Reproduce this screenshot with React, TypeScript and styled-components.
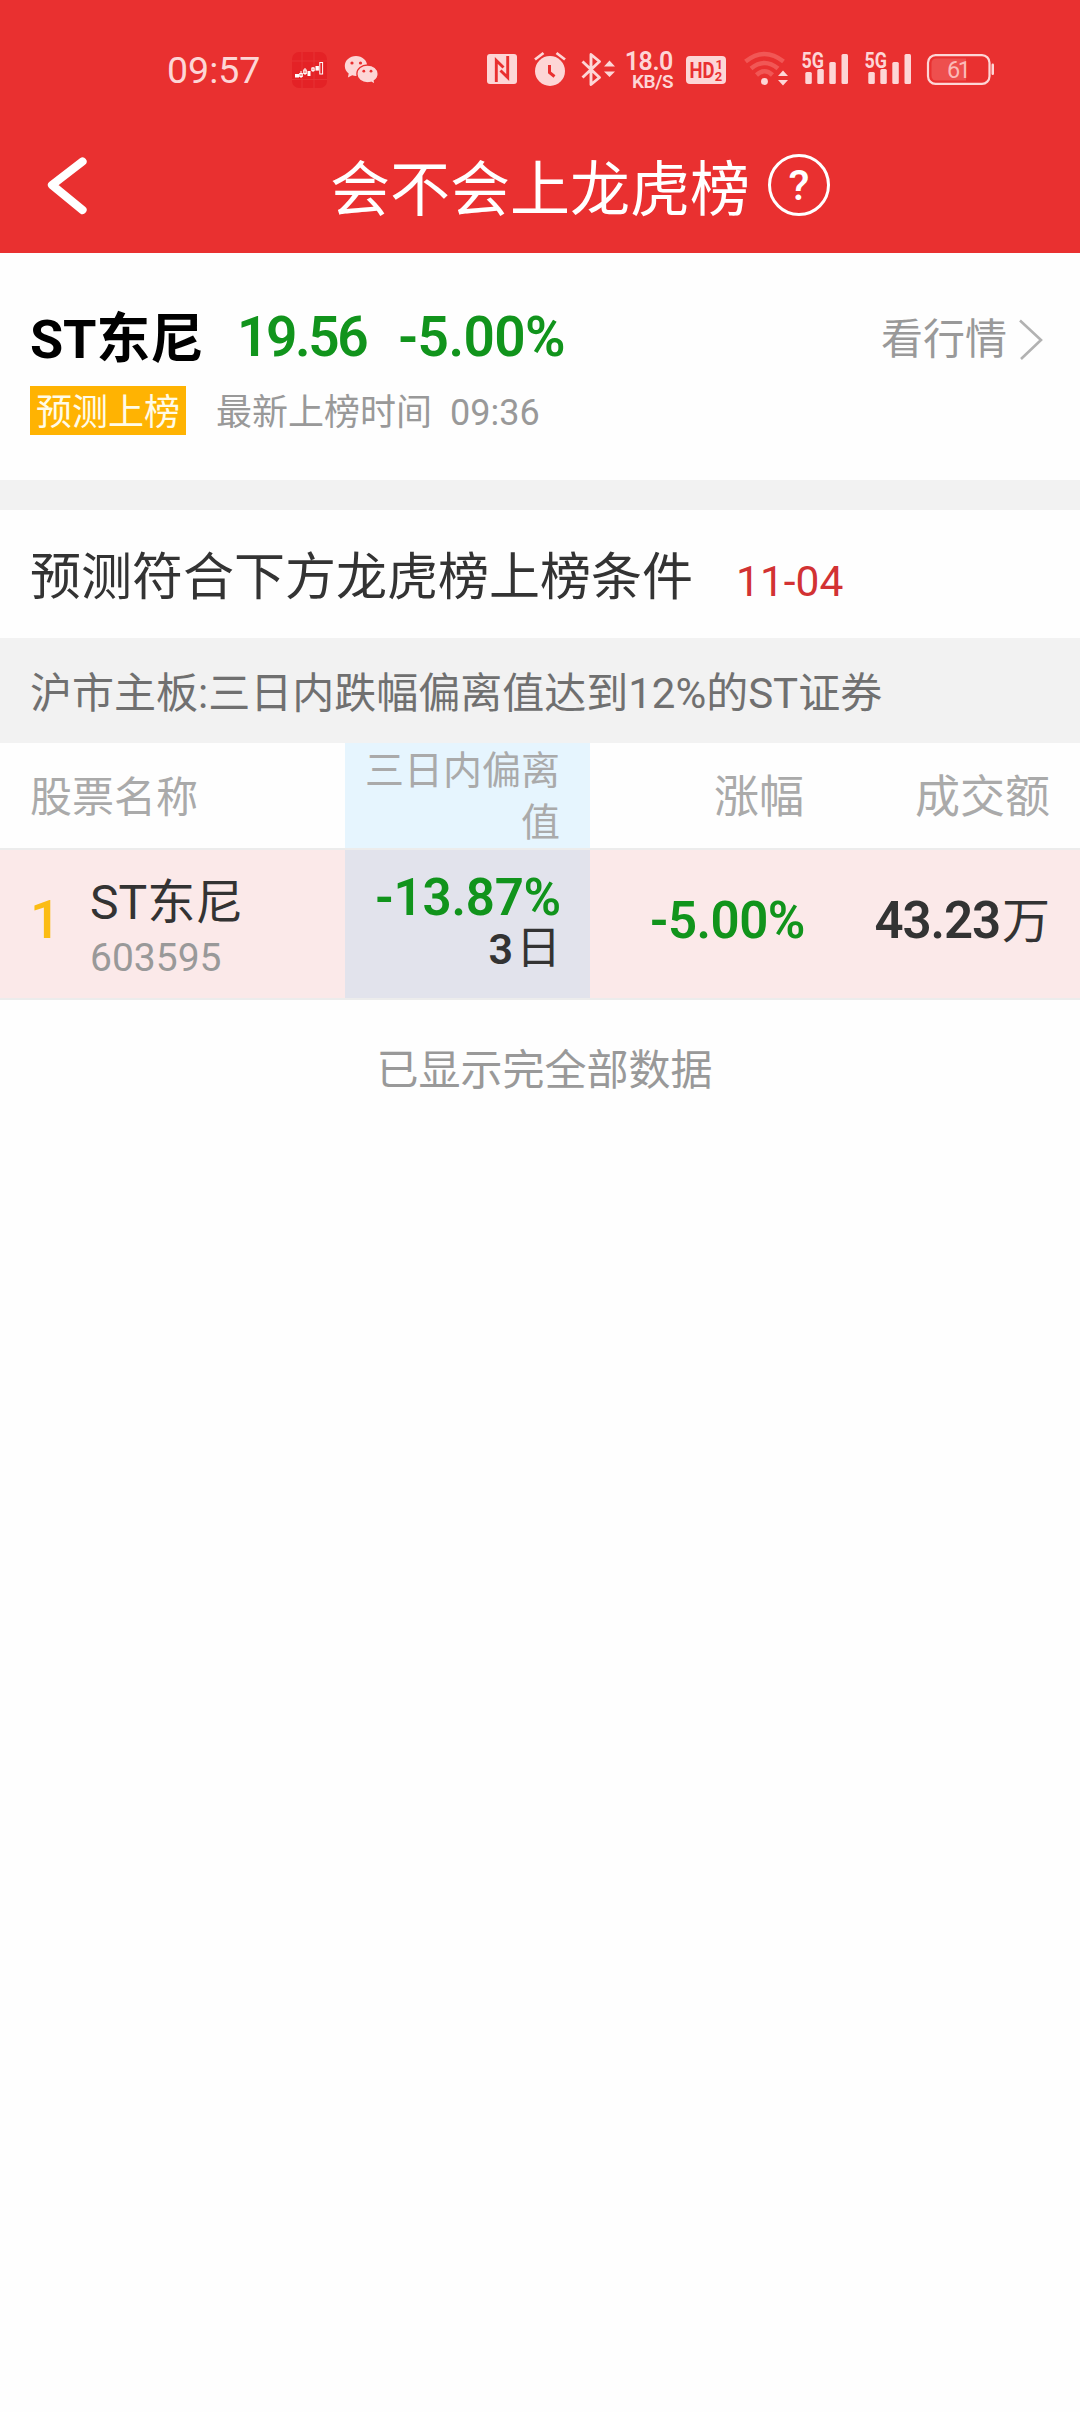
import React from "react";
import styled, { createGlobalStyle } from "styled-components";

const fontStack = `Roboto, "Noto Sans CJK SC", sans-serif`;
const red = "#e93030";
const pale = "#fdd6d6";
const green = "#11941c";

const GlobalStyle = createGlobalStyle`
  * { box-sizing: border-box; }
  body { margin: 0; background: #fefefe; font-family: ${fontStack}; }
`;

const Page = styled.div`
  width: 1080px;
  min-height: 2412px;
  background: #fefefe;
  display: flex;
  flex-direction: column;
`;

const TopArea = styled.header`
  height: 253px;
  background: ${red};
  display: flex;
  flex-direction: column;
`;

const StatusBar = styled.div`
  height: 120px;
  padding: 50px 85px 0 167px;
  display: flex;
  align-items: flex-start;
  color: ${pale};
`;

const StatusItem = styled.div<{ $before?: number }>`
  height: 40px;
  flex: none;
  margin-left: ${(p) => p.$before ?? 0}px;
  svg { display: block; overflow: visible; }
`;

const Clock = styled.div`
  width: 93px;
  flex: none;
  font-size: 37.5px;
  line-height: 41px;
  white-space: nowrap;
`;

const Speed = styled.div`
  width: 48px;
  margin-left: 10px;
  display: flex;
  flex-direction: column;
  align-items: flex-end;
  font-weight: 600;
  white-space: nowrap;
`;
const SpeedValue = styled.span`
  font-size: 25px;
  line-height: 24px;
  letter-spacing: -0.4px;
`;
const SpeedUnit = styled.span`
  height: 15px;
  font-size: 19px;
  line-height: 15px;
  font-weight: 600;
  letter-spacing: -0.5px;
`;

const TitleBar = styled.div`
  height: 133px;
  display: flex;
  align-items: flex-start;
  padding: 31px 0 0 46px;
`;

const BackButton = styled.button`
  width: 44px;
  height: 68px;
  padding: 0;
  border: 0;
  background: none;
  svg { display: block; }
`;

const Title = styled.h1`
  margin: 4px 0 0 240px;
  font-size: 60px;
  line-height: 72px;
  font-weight: 400;
  color: #fff;
  white-space: nowrap;
`;

const HelpButton = styled.button`
  width: 62px;
  height: 62px;
  margin: 3px 0 0 18px;
  padding: 0;
  border: 3.5px solid #fff;
  border-radius: 50%;
  background: none;
  display: flex;
  align-items: center;
  justify-content: center;
  font: 500 43px/55px ${fontStack};
  color: #fff;
`;

const Quote = styled.section`
  height: 227px;
  padding: 48px 35px 0 30px;
  display: flex;
  justify-content: space-between;
`;

const QuoteInfo = styled.div`
  display: flex;
  flex-direction: column;
`;

const QuoteLine = styled.div`
  height: 72px;
  display: flex;
  align-items: center;
  white-space: nowrap;
`;

const StockName = styled.strong`
  width: 207px;
  padding-top: 5px;
  font-size: 54px;
  line-height: 72px;
  font-weight: 700;
  letter-spacing: -0.2px;
  color: #000;
`;

const Figure = styled.span<{ $size: number; $spacing?: number; $tone?: string }>`
  font-size: ${(p) => p.$size}px;
  line-height: 1;
  font-weight: 600;
  letter-spacing: ${(p) => p.$spacing ?? 0}px;
  color: ${(p) => p.$tone ?? green};
  white-space: nowrap;
`;

const Price = styled(Figure)`
  width: 161px;
`;

const TagLine = styled.div`
  height: 49px;
  margin-top: 13px;
  display: flex;
  align-items: center;
  font-size: 36px;
  color: #999;
  white-space: nowrap;
`;

const Tag = styled.span`
  width: 156px;
  height: 49px;
  margin-right: 30px;
  background: #ffb302;
  color: #fffbe8;
  line-height: 55px;
  text-align: center;
`;

const TagNote = styled.span`
  height: 49px;
  line-height: 55px;
`;

const TagTime = styled(TagNote)`
  margin-left: 18px;
`;

const MarketLink = styled.a`
  height: 80px;
  margin-top: -1px;
  display: flex;
  align-items: center;
  gap: 10px;
  font-size: 42px;
  line-height: 60px;
  color: #999;
  white-space: nowrap;
`;

const Divider = styled.div`
  height: 30px;
  background: #f2f2f2;
`;

const Heading = styled.div`
  height: 128px;
  padding: 0 30px;
  display: flex;
  align-items: center;
  gap: 43px;
  overflow: hidden;
`;

const HeadingText = styled.h2`
  margin: 0;
  padding-top: 8px;
  font-size: 51px;
  line-height: 120px;
  font-weight: 400;
  color: #333;
`;

const HeadingDate = styled.span`
  padding-top: 15px;
  font-size: 42.5px;
  line-height: 50px;
  color: #d23233;
`;

const Rule = styled.div`
  height: 105px;
  padding: 0 30px;
  background: #f2f2f2;
  font-size: 42px;
  line-height: 111px;
  font-weight: 400;
  color: #707070;
  white-space: nowrap;
`;

const TableRow = styled.div<{ $h: number; $bg?: string }>`
  height: ${(p) => p.$h}px;
  border-bottom: 2px solid #ececec;
  background: ${(p) => p.$bg ?? "transparent"};
  display: grid;
  grid-template-columns: 345px 245px 215px 275px;
  grid-template-rows: 100%;
`;

const HeadCell = styled.div<{ $size: number; $bg?: string; $pad?: string; $left?: boolean }>`
  padding: ${(p) => p.$pad ?? "0"};
  background: ${(p) => p.$bg ?? "transparent"};
  display: flex;
  align-items: center;
  justify-content: ${(p) => (p.$left ? "flex-start" : "flex-end")};
  text-align: right;
  font-size: ${(p) => p.$size}px;
  line-height: 52px;
  font-weight: 400;
  color: #aaa;
`;

const NameCell = styled.div`
  display: flex;
  padding-left: 30px;
`;

const Rank = styled.span`
  width: 60px;
  font-size: 54px;
  line-height: 139px;
  font-weight: 500;
  color: #fbbc14;
`;

const NameStack = styled.div`
  padding-top: 22px;
  display: flex;
  flex-direction: column;
`;

const RowName = styled.span`
  font-size: 48px;
  line-height: 61px;
  font-weight: 400;
  color: #333;
  white-space: nowrap;
`;

const RowCode = styled.span`
  font-size: 39px;
  line-height: 50px;
  color: #999;
`;

const DeviationCell = styled.div`
  padding: 22px 29px 0 0;
  background: #e2e3ec;
  display: flex;
  flex-direction: column;
  align-items: flex-end;
`;

const Days = styled.span`
  display: flex;
  align-items: center;
  height: 48px;
  margin-top: 2px;
  gap: 3px;
  line-height: 48px;
  color: #333;
  font-size: 45px;
  font-weight: 400;
`;

const ValueCell = styled.div<{ $pad: number }>`
  height: 141px;
  padding-right: ${(p) => p.$pad}px;
  display: flex;
  align-items: center;
  justify-content: flex-end;
`;

const Unit = styled.span`
  margin-left: 2px;
  padding-top: 3px;
  font-size: 48px;
  line-height: 60px;
  font-weight: 400;
  color: #333;
`;

const EndNote = styled.p`
  margin: 41px 0 0 9px;
  text-align: center;
  font-size: 42px;
  line-height: 60px;
  font-weight: 400;
  color: #999;
`;

const AppBadge = () => (
  <svg width="35" height="40" viewBox="292 50 35 40">
    <rect x="292" y="52" width="35" height="36" rx="7" fill="#e42226" />
    <path d="M292 79.5h35M302 52v36M314 52v36M292 61h35" stroke="#e83a3d" strokeWidth=".7" />
    <g fill="#fff">
      <rect x="295" y="74" width="4" height="3.5" />
      <rect x="307.5" y="71" width="3" height="5" />
      <rect x="315.5" y="66" width="3.4" height="4.6" />
    </g>
    <g fill="none" stroke="#fff" strokeWidth="1">
      <path d="M301 71v7M305 68v7M313 67v5" />
      <rect x="299.7" y="73.5" width="2.6" height="3" />
      <rect x="303.7" y="70" width="2.6" height="3.5" />
      <rect x="311.8" y="68" width="2.4" height="2.6" />
      <rect x="319.8" y="62.5" width="2.8" height="11.5" />
    </g>
  </svg>
);

const WeChat = () => (
  <svg width="33" height="40" viewBox="345 50 33 40">
    <path fill={pale} d="M356 56c-6.300 0-11.200 4.400-11.200 9.900 0 3 1.500 5.700 3.900 7.500l-.8 4 4.300-2.100c1.200.4 2.500.6 3.800.6 6.200 0 11.200-4.500 11.200-10S362.200 56 356 56z" />
    <path fill={pale} stroke={red} strokeWidth="1.300" d="M367.500 65c-5.900 0-10.600 4-10.600 8.900s4.700 8.900 10.600 8.900c1.300 0 2.500-.2 3.600-.5l4 2-.8-3.600c2.500-1.700 3.900-4.100 3.900-6.800 0-4.900-4.800-8.900-10.700-8.900z" />
    <g fill={red}>
      <circle cx="352" cy="63" r="1.600" /><circle cx="360.500" cy="63" r="1.600" />
      <circle cx="363.800" cy="71.200" r="1.400" /><circle cx="371" cy="71.200" r="1.400" />
    </g>
  </svg>
);

const Nfc = () => (
  <svg width="30" height="40" viewBox="487 50 30 40">
    <rect x="487" y="54" width="30" height="30" rx="3" fill={pale} />
    <path d="M496.300 82V60.500L503.500 67.500M507.700 56V77.500L500.500 70.500" fill="none" stroke={red} strokeWidth="2.900" />
  </svg>
);

const Alarm = () => (
  <svg width="32" height="40" viewBox="534 50 32 40">
    <circle cx="550" cy="71" r="15" fill={pale} />
    <path d="M535 59.500l8.500-6.500M565 59.500l-8.500-6.500" stroke={pale} strokeWidth="2.800" />
    <path d="M549.500 65v7.500l5 4" fill="none" stroke={red} strokeWidth="3" />
  </svg>
);

const Bluetooth = () => (
  <svg width="34" height="40" viewBox="581 50 34 40">
    <path d="M582.500 61.500l17 16L591 84.500v-30l8.500 7-17 16" fill="none" stroke={pale} strokeWidth="2.900" strokeLinejoin="round" />
    <path d="M604 66.500l5.500-6 5.500 6zM604 71.500l5.500 5.500 5.500-5.500z" fill={pale} />
  </svg>
);

const HdVoice = () => (
  <svg width="40" height="40" viewBox="686 50 40 40" fontFamily="Roboto, sans-serif" fontWeight="700">
    <rect x="686" y="56" width="40" height="28" rx="4" fill={pale} />
    <text x="689.500" y="77.500" fontSize="22" textLength="25" lengthAdjust="spacingAndGlyphs" fill={red}>HD</text>
    <text x="715.500" y="69" fontSize="13" fill={red}>1</text>
    <text x="714.800" y="81" fontSize="13" fill={red}>2</text>
  </svg>
);

const Wifi = () => (
  <svg width="44" height="40" viewBox="744 50 44 40">
    <g fill="none" stroke="#f15755" strokeWidth="4.500">
      <path d="M745.500 61.500Q764.500 46.500 783.500 61.500" />
      <path d="M751 68.500Q764.500 57.500 778 68.500" />
      <path d="M756.500 75Q764.500 67.500 772.500 75" />
    </g>
    <circle cx="764.500" cy="81.500" r="3.400" fill={pale} />
    <path d="M778 76l5-5.500 5 5.500zM778 80l5 5.500 5-5.500z" fill={pale} />
  </svg>
);

const Signal = () => (
  <svg width="47" height="40" viewBox="802 50 47 40">
    <text x="801.500" y="67.500" fontFamily="Roboto, sans-serif" fontWeight="700" fontSize="21.500" textLength="22.500" lengthAdjust="spacingAndGlyphs" fill={pale}>5G</text>
    <g fill={pale}>
      <rect x="805.300" y="72" width="6.500" height="12" rx="1.500" />
      <rect x="817.300" y="69" width="6.500" height="15" rx="1.500" />
      <rect x="829.300" y="62" width="6.500" height="22" rx="1.500" />
      <rect x="841.500" y="54" width="6.500" height="30" rx="1.500" />
    </g>
  </svg>
);

const Battery = () => (
  <svg width="68" height="40" viewBox="927 50 68 40">
    <rect x="928" y="55.200" width="61.500" height="28.600" rx="7.500" fill="none" stroke={pale} strokeWidth="2.200" />
    <path d="M936 58.500h30v22h-30a4.500 4.500 0 0 1-4.500-4.500V63a4.500 4.500 0 0 1 4.500-4.500z" fill="#ee4f4e" />
    <rect x="991.500" y="63.500" width="2.500" height="11.500" rx="1.200" fill={pale} />
    <text x="947" y="78" fontFamily="Roboto, sans-serif" fontSize="23.500" textLength="24" fill="#fbb9b8">61</text>
  </svg>
);

export default function App() {
  return (
    <Page>
      <GlobalStyle />
      <TopArea>
        <StatusBar>
          <Clock>09:57</Clock>
          <StatusItem $before={32}><AppBadge /></StatusItem>
          <StatusItem $before={18}><WeChat /></StatusItem>
          <StatusItem $before={109}><Nfc /></StatusItem>
          <StatusItem $before={17}><Alarm /></StatusItem>
          <StatusItem $before={15}><Bluetooth /></StatusItem>
          <Speed>
            <SpeedValue>18.0</SpeedValue>
            <SpeedUnit>KB/S</SpeedUnit>
          </Speed>
          <StatusItem $before={13}><HdVoice /></StatusItem>
          <StatusItem $before={18}><Wifi /></StatusItem>
          <StatusItem $before={14}><Signal /></StatusItem>
          <StatusItem $before={16}><Signal /></StatusItem>
          <StatusItem $before={15}><Battery /></StatusItem>
        </StatusBar>
        <TitleBar>
          <BackButton aria-label="返回">
            <svg width="44" height="68" viewBox="46 151 44 68">
              <path d="M82.500 161.500L52 185L82.500 210" fill="none" stroke="#fff" strokeWidth="8.200" strokeLinecap="round" strokeLinejoin="round" />
            </svg>
          </BackButton>
          <Title>会不会上龙虎榜</Title>
          <HelpButton>?</HelpButton>
        </TitleBar>
      </TopArea>

      <Quote>
        <QuoteInfo>
          <QuoteLine>
            <StockName>ST东尼</StockName>
            <Price $size={55} $spacing={-2.4}>19.56</Price>
            <Figure $size={55} $spacing={-0.6}>-5.00%</Figure>
          </QuoteLine>
          <TagLine>
            <Tag>预测上榜</Tag>
            <TagNote>最新上榜时间</TagNote>
            <TagTime>09:36</TagTime>
          </TagLine>
        </QuoteInfo>
        <MarketLink>
          <span>看行情</span>
          <svg width="28" height="42" viewBox="0 0 28 42">
            <path d="M3 1.500L24 21L4 40" fill="none" stroke="#b2b2b2" strokeWidth="2.600" />
          </svg>
        </MarketLink>
      </Quote>

      <Divider />
      <Heading>
        <HeadingText>预测符合下方龙虎榜上榜条件</HeadingText>
        <HeadingDate>11-04</HeadingDate>
      </Heading>
      <Rule>沪市主板:三日内跌幅偏离值达到12%的ST证券</Rule>

      <TableRow $h={107}>
        <HeadCell $size={42} $pad="4px 0 0 30px" $left>股票名称</HeadCell>
        <HeadCell $size={39} $bg="#e6f5fe" $pad="2px 30px 0 20px">三日内偏离值</HeadCell>
        <HeadCell $size={45} $pad="4px 1px 0 0">涨幅</HeadCell>
        <HeadCell $size={45} $pad="4px 30px 0 0">成交额</HeadCell>
      </TableRow>
      <TableRow $h={150} $bg="#fbe9e9">
        <NameCell>
          <Rank>1</Rank>
          <NameStack>
            <RowName>ST东尼</RowName>
            <RowCode>603595</RowCode>
          </NameStack>
        </NameCell>
        <DeviationCell>
          <Figure $size={51} $spacing={-0.2}>-13.87%</Figure>
          <Days>
            <Figure $size={43} $tone="#333">3</Figure>日
          </Days>
        </DeviationCell>
        <ValueCell $pad={0}>
          <Figure $size={51} $spacing={-0.5}>-5.00%</Figure>
        </ValueCell>
        <ValueCell $pad={30}>
          <Figure $size={51} $spacing={-1.1} $tone="#333">43.23</Figure>
          <Unit>万</Unit>
        </ValueCell>
      </TableRow>
      <EndNote>已显示完全部数据</EndNote>
    </Page>
  );
}
